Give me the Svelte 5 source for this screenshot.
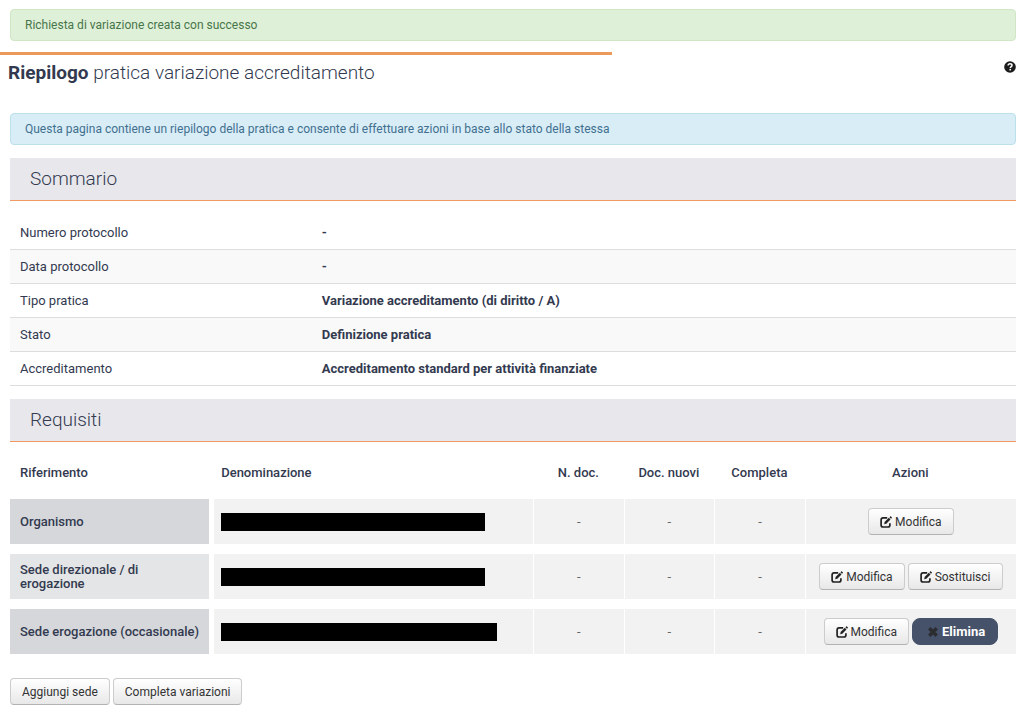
<script>
  const summary = [
    { label: 'Numero protocollo', value: '-' },
    { label: 'Data protocollo', value: '-' },
    { label: 'Tipo pratica', value: 'Variazione accreditamento (di diritto / A)' },
    { label: 'Stato', value: 'Definizione pratica' },
    { label: 'Accreditamento', value: 'Accreditamento standard per attività finanziate' }
  ];

  const requirements = [
    { ref: 'Organismo', nameWidth: 264, actions: ['Modifica'] },
    { ref: 'Sede direzionale / di erogazione', nameWidth: 264, actions: ['Modifica', 'Sostituisci'] },
    { ref: 'Sede erogazione (occasionale)', nameWidth: 276, actions: ['Modifica', 'Elimina'] }
  ];
</script>

{#snippet editIcon()}
  <svg class="icon" viewBox="0 0 12 12" aria-hidden="true">
    <path d="M7.2 1.9H3.2C1.9 1.9 1.1 2.7 1.1 4v4.9c0 1.3.8 2.1 2.1 2.1h4.6c1.3 0 2.1-.8 2.1-2.1V7.2" fill="none" stroke="#222" stroke-width="1.7" />
    <path d="M4.2 8.2l.4-2.2 4.2-4.2 1.7 1.7-4.2 4.3z" fill="#222" />
    <path d="M9.4 1.2l.8-.8c.2-.2.5-.2.7 0l.9.9c.2.2.2.5 0 .7l-.8.8z" fill="#222" />
  </svg>
{/snippet}

<main>
  <div class="alert success" role="status">Richiesta di variazione creata con successo</div>

  <div class="rule"></div>
  <header>
    <h1><strong>Riepilogo</strong> pratica variazione accreditamento</h1>
    <button class="help" aria-label="Aiuto">
      <svg viewBox="0 0 12 12" aria-hidden="true">
        <circle cx="6" cy="6" r="5.8" fill="#1b1b1b" />
        <path d="M4.1 4.6C4.1 3.3 4.9 2.8 6 2.8s2 .6 2 1.6c0 1.2-1.7 1.2-1.7 2.5" fill="none" stroke="#fff" stroke-width="1.5" />
        <rect x="5.4" y="7.9" width="1.6" height="1.5" fill="#fff" />
      </svg>
    </button>
  </header>

  <div class="alert info">Questa pagina contiene un riepilogo della pratica e consente di effettuare azioni in base allo stato della stessa</div>

  <section>
    <h2>Sommario</h2>
    <table class="summary">
      <tbody>
        {#each summary as row}
          <tr><th scope="row">{row.label}</th><td>{row.value}</td></tr>
        {/each}
      </tbody>
    </table>
  </section>

  <section>
    <h2>Requisiti</h2>
    <table class="requirements">
      <colgroup>
        <col class="c-ref" /><col class="c-name" /><col class="c-num" /><col class="c-num" /><col class="c-num" /><col />
      </colgroup>
      <thead>
        <tr>
          <th scope="col">Riferimento</th>
          <th scope="col">Denominazione</th>
          <th scope="col" class="center">N. doc.</th>
          <th scope="col" class="center">Doc. nuovi</th>
          <th scope="col" class="center">Completa</th>
          <th scope="col" class="center">Azioni</th>
        </tr>
      </thead>
      <tbody>
        {#each requirements as row}
          <tr>
            <th scope="row">{row.ref}</th>
            <td class="name"><span class="redacted" style:width="{row.nameWidth}px"></span></td>
            <td class="center">-</td>
            <td class="center">-</td>
            <td class="center">-</td>
            <td>
              <div class="actions">
                {#each row.actions as action}
                  {#if action === 'Elimina'}
                    <button class="btn danger">
                      <svg class="icon" viewBox="0 0 12 12" aria-hidden="true">
                        <path d="M2.3 2.3l7.4 7.4M9.7 2.3L2.3 9.7" stroke="#2b2d30" stroke-width="3.4" />
                      </svg>
                      {action}
                    </button>
                  {:else}
                    <button class="btn">{@render editIcon()}{action}</button>
                  {/if}
                {/each}
              </div>
            </td>
          </tr>
        {/each}
      </tbody>
    </table>
  </section>

  <footer>
    <button class="btn">Aggiungi sede</button>
    <button class="btn">Completa variazioni</button>
  </footer>
</main>

<style>
  :global(body) {
    margin: 0;
    background: #fff;
  }
  main {
    padding: 9px 8px 12px 10px;
    font-family: Roboto, 'Liberation Sans', sans-serif;
    font-size: 13px;
    line-height: 17px;
    color: #333a50;
  }
  .alert {
    padding: 7px 14px 6px;
    border: 1px solid;
    border-radius: 4px;
    font-size: 12px;
    line-height: 17px;
  }
  .success {
    background: #dff0d8;
    border-color: #d0e6c4;
    color: #47764a;
  }
  .info {
    background: #d9edf7;
    border-color: #bce0ea;
    color: #41708f;
  }
  .rule {
    width: calc(60% + 8px);
    height: 3px;
    margin: 11px 0 0 -10px;
    background: #ec9a5b;
  }
  header {
    display: flex;
    justify-content: space-between;
    align-items: flex-start;
    height: 58px;
    margin-left: -2px;
    padding-top: 1px;
    box-sizing: border-box;
  }
  h1 {
    margin: 5px 0 0;
    font-size: 19px;
    line-height: 24px;
    font-weight: 300;
  }
  h1 strong {
    font-weight: 700;
  }
  .help {
    width: 12px;
    height: 12px;
    margin-top: 5px;
    padding: 0;
    border: 0;
    background: none;
    cursor: pointer;
  }
  .help svg {
    display: block;
  }
  section {
    margin-top: 13px;
  }
  h2 {
    margin: 0;
    padding: 9px 20px;
    background: #e7e7ec;
    border-bottom: 1px solid #f09a62;
    font-size: 19px;
    line-height: 24px;
    font-weight: 300;
  }
  table {
    width: 100%;
    border-spacing: 0;
    table-layout: fixed;
  }
  th {
    text-align: left;
  }
  .summary {
    margin-top: 15px;
  }
  .summary th,
  .summary td {
    padding: 8px 10px;
    border-bottom: 1px solid #ddd;
  }
  .summary th {
    width: 30%;
    box-sizing: border-box;
    font-weight: 400;
  }
  .summary td {
    font-weight: 700;
  }
  .summary tr:nth-child(even) {
    background: #f9f9f9;
  }
  .c-ref {
    width: 20%;
  }
  .c-name {
    width: 32%;
  }
  .c-num {
    width: 9%;
  }
  .requirements th {
    font-weight: 500;
    padding: 0 10px;
  }
  .requirements thead th {
    padding: 22px 10px 18px;
  }
  .requirements .center {
    padding: 0;
    text-align: center;
  }
  .requirements thead .center {
    padding: 22px 0 18px;
  }
  .requirements tbody th,
  .requirements tbody td {
    height: 45px;
    border-bottom: 10px solid #fff;
  }
  .requirements tbody th {
    background: #d5d7da;
    border-right: 2px solid #fff;
    line-height: 14px;
  }
  .requirements tbody tr:nth-child(even) th {
    background: #e4e5e6;
  }
  .requirements tbody td {
    padding: 0;
    background: #f2f2f2;
    border-left: 1px solid #fff;
    color: #666;
  }
  .requirements tbody .name {
    padding-left: 7px;
    border-left-width: 3px;
  }
  .redacted {
    display: block;
    height: 18px;
    background: #000;
  }
  .actions {
    display: flex;
    justify-content: center;
    gap: 3px;
  }
  .btn {
    display: inline-flex;
    align-items: center;
    gap: 3px;
    height: 27px;
    padding: 1px 11px 0;
    border: 1px solid #ccc;
    border-bottom-color: #b3b3b3;
    border-radius: 4px;
    background: linear-gradient(#fff, #e8e8e8);
    color: #333;
    font: 400 12px/18px Roboto, 'Liberation Sans', sans-serif;
    white-space: nowrap;
    cursor: pointer;
  }
  .icon {
    width: 12px;
    height: 12px;
    flex: none;
  }
  .danger {
    padding: 0 12px 0 14px;
    border-color: #465269;
    border-radius: 8px;
    background: #465269;
    color: #fff;
    font-size: 13px;
    font-weight: 700;
  }
  footer {
    display: flex;
    gap: 3px;
    margin-top: 14px;
  }
</style>
